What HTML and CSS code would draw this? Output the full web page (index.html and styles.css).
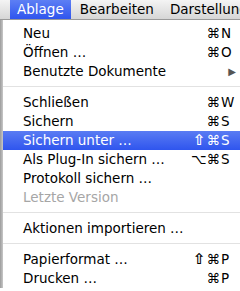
FILE: index.html
```html
<!DOCTYPE html>
<html lang="de">

<head>
    <meta charset="UTF-8">
    <meta name="viewport" content="width=device-width, initial-scale=1.0">
    <title>Ablage</title>
    <link rel="stylesheet" href="styles.css">
</head>

<body>
    <div class="menubar">
        <span class="menubar-item active">Ablage</span>
        <span class="menubar-item">Bearbeiten</span>
        <span class="menubar-item">Darstellung</span>
    </div>

    <div class="screen">
        <div class="window-edge"></div>
        <ul class="menu">
            <li class="menu-item"><span>Neu</span><span class="shortcut"><span class="mods">⌘</span><span class="key">N</span></span></li>
            <li class="menu-item"><span>Öffnen …</span><span class="shortcut"><span class="mods">⌘</span><span class="key">O</span></span></li>
            <li class="menu-item"><span>Benutzte Dokumente</span><span class="submenu">▶</span></li>
            <li class="separator"></li>
            <li class="menu-item"><span>Schließen</span><span class="shortcut"><span class="mods">⌘</span><span class="key">W</span></span></li>
            <li class="menu-item"><span>Sichern</span><span class="shortcut"><span class="mods">⌘</span><span class="key">S</span></span></li>
            <li class="menu-item selected"><span>Sichern unter …</span><span class="shortcut"><span class="mods"><span class="shift">⇧</span>⌘</span><span class="key">S</span></span></li>
            <li class="menu-item"><span>Als Plug-In sichern …</span><span class="shortcut"><span class="mods">⌥⌘</span><span class="key">S</span></span></li>
            <li class="menu-item"><span>Protokoll sichern …</span></li>
            <li class="menu-item disabled"><span>Letzte Version</span></li>
            <li class="separator"></li>
            <li class="menu-item"><span>Aktionen importieren …</span></li>
            <li class="separator"></li>
            <li class="menu-item"><span>Papierformat …</span><span class="shortcut"><span class="mods"><span class="shift">⇧</span>⌘</span><span class="key">P</span></span></li>
            <li class="menu-item"><span>Drucken …</span><span class="shortcut"><span class="mods">⌘</span><span class="key">P</span></span></li>
        </ul>
    </div>
</body>

</html>
```

FILE: styles.css
```css
body {
    margin: 0;
    width: 240px;
    height: 291px;
    overflow: hidden;
    font-family: "DejaVu Sans", "Liberation Sans", sans-serif;
    font-size: 13.5px;
    color: #000;
    background-color: #fff;
}

.menubar {
    display: flex;
    height: 19px;
    padding-left: 10px;
    background: linear-gradient(#f4f4f4, #d6d6d6);
    border-bottom: 1px solid #9a9a9a;
    white-space: nowrap;
    overflow: hidden;
}

.menubar-item {
    padding: 0 7px;
    margin-right: 2px;
    line-height: 19px;
    flex-shrink: 0;
}

.menubar-item.active {
    color: #fff;
    background: linear-gradient(#5d7ff4, #2f55ee);
}

.screen {
    display: flex;
}

/* the window behind the menu */
.window-edge {
    width: 3px;
    flex-shrink: 0;
    background: linear-gradient(to right, #9c9c9c, #c8c8c8);
}

.menu {
    list-style: none;
    margin: 0;
    padding: 4px 0 0;
    width: 260px;
    flex-shrink: 0;
    background-color: #fff;
}

.menu-item {
    display: flex;
    justify-content: space-between;
    height: 19px;
    line-height: 19px;
    padding: 0 30px 0 20px;
    white-space: nowrap;
}

.menu-item.selected {
    color: #fff;
    background: linear-gradient(#5a7cf3, #2f55ee);
}

.menu-item.disabled {
    color: #a6a6a6;
}

.separator {
    height: 1px;
    margin: 5px 0 6px;
    background-color: #e2e2e2;
}

.shortcut {
    display: flex;
}

.mods {
    text-align: right;
}

.shift {
    font-size: 15px;
    font-weight: bold;
    margin-right: 1px;
}

.key {
    width: 12px;
    padding-left: 1px;
}

.submenu {
    font-size: 10px;
    color: #555;
    margin-right: -3px;
}
```
